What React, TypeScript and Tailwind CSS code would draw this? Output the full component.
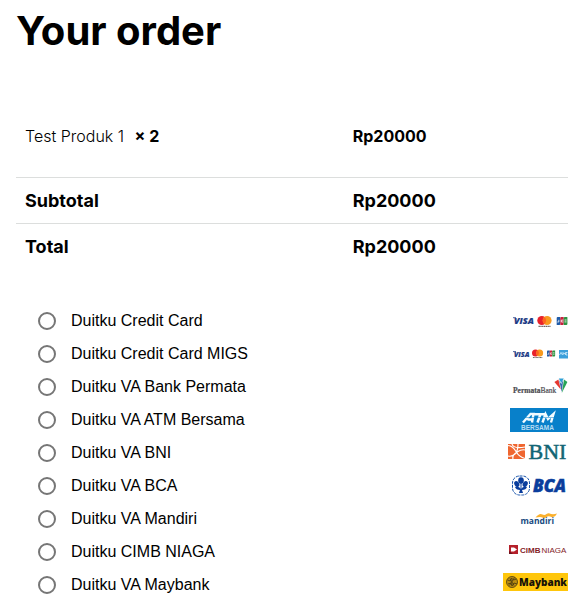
import type { ReactNode } from "react";

function Logo({ label, children }: { label: string; children: ReactNode }) {
  return (
    <svg role="img" aria-label={label} viewBox="0 0 66 33" className="h-[33px] w-[66px] shrink-0">
      {children}
    </svg>
  );
}

const sans = "'Open Sans', 'Noto Sans', sans-serif";

function VisaMark({ size, y }: { size: number; y: number }) {
  return (
    <g>
      <text x="12" y={y} fontFamily={sans} fontSize={size} fontWeight="800" fontStyle="italic" fill="#1b3a85" stroke="#1b3a85" strokeWidth=".2">
        VISA
      </text>
      <path d={`M11 ${y - size * 0.7}h3`} stroke="#1b3a85" strokeWidth=".8" />
    </g>
  );
}

function Mastercard() {
  return (
    <g>
      <circle cx="4.5" cy="4.5" r="4.5" fill="#e8212b" />
      <circle cx="9.8" cy="4.5" r="4.5" fill="#f79a1f" />
      <path d="M7.15 1a4.5 4.5 0 0 1 0 7a4.5 4.5 0 0 1 0-7z" fill="#ff6420" />
      <path d="M1.2 10.3h12" stroke="#4a3a38" strokeWidth="1" strokeDasharray="1.4 .4" />
    </g>
  );
}

function Jcb() {
  return (
    <g>
      <path d="M1 0h2.6v7q0 1-1 1H0V1q0-1 1-1z" fill="#1f5ba8" />
      <path d="M4.6 0H7v7q0 1-1 1H3.6V1q0-1 1-1z" fill="#c8203c" />
      <path d="M8.3 0h2.4v7q0 1-1 1H7V1q0-1 1.3-1z" fill="#2c9440" />
      <path d="M.6 5h1.5V2.8M6.6 3.1H4.6v1.9h2M7.8 3h2.1M7.8 4.9h2.1" fill="none" stroke="#fff" strokeWidth=".8" />
    </g>
  );
}

const cardLogo = (
  <Logo label="Visa, Mastercard, JCB">
    <VisaMark size={9} y={20} />
    <g transform="translate(35.3 12)"><Mastercard /></g>
    <g transform="translate(54.7 13)"><Jcb /></g>
  </Logo>
);

const migsLogo = (
  <Logo label="Visa, Mastercard, JCB, American Express">
    <VisaMark size={7} y={19.5} />
    <g transform="translate(30 12.5) scale(.78)"><Mastercard /></g>
    <g transform="translate(45 13.5) scale(.76)"><Jcb /></g>
    <rect x="57" y="13" width="9" height="8.5" fill="#3b9fda" />
    <path d="M57.5 18l1.5-2.6L60.5 18M61 18v-2.5l1.2 1.5 1.2-1.5V18M65.5 15.5h-1.5V18h1.5" fill="none" stroke="#d5effc" strokeWidth=".8" />
  </Logo>
);

const permataLogo = (
  <Logo label="PermataBank">
    <text x="11" y="23" fontFamily="'Liberation Serif', serif" fontSize="7.5" fontWeight="700" fill="#4d4d52" stroke="#4d4d52" strokeWidth=".2">
      Permata<tspan fontWeight="400">Bank</tspan>
    </text>
    <path d="M52.4 12l4-2.4 2.4 10z" fill="#e5372f" />
    <path d="M56.8 8.6h5l-2.5 4.4z" fill="#2e9fd5" />
    <path d="M57 10l2.2 4 2-4-1.4 12z" fill="#3567ad" />
    <path d="M62 9.6l3.4 2.4-5.6 11z" fill="#27a457" />
  </Logo>
);

const atmLogo = (
  <Logo label="ATM Bersama">
    <rect x="8" y="5" width="58" height="24" fill="#0880ca" />
    <g fill="none" stroke="#f3fbff">
      <path d="M21 19.5l7.5-8.5h3L30 19.5M25.5 16.5h5M32 11.2h11M38.5 11l-3 8.5M40.5 19.5l3-8.5 2.5 5 5.5-5-2.5 8.5" strokeWidth="2.4" />
      <path d="M20.5 14.5h12M34 14.5h18" stroke="#0880ca" strokeWidth=".5" />
    </g>
    <text x="19" y="26.5" fontFamily="'Liberation Sans', sans-serif" fontSize="6.5" fontWeight="700" fill="#b5dcf2">BERSAMA</text>
  </Logo>
);

const bniLogo = (
  <Logo label="BNI">
    <rect x="6" y="8" width="17" height="15" fill="#ef6630" />
    <path d="M6 9.5q5 .5 8 6t9 7M6 20q4 1 7-2t3-10M11 23q-1-4 4-7t8-2M10 8q1 5 13 3" fill="none" stroke="#fff" strokeWidth="1.2" />
    <text x="26.5" y="23" fontFamily="'Liberation Serif', serif" fontSize="22" fill="#126574" stroke="#126574" strokeWidth=".5">BNI</text>
  </Logo>
);

const bcaLogo = (
  <Logo label="BCA">
    <rect x="10.5" y="7" width="17" height="19" rx="7" fill="#fff" stroke="#1552ab" strokeWidth="1" strokeDasharray="3 1" />
    <g fill="#0a3d9c">
      <ellipse cx="19" cy="11.5" rx="2.8" ry="3.2" />
      <ellipse cx="14.8" cy="15" rx="2.3" ry="3.2" transform="rotate(-30 14.8 15)" />
      <ellipse cx="23.2" cy="15" rx="2.3" ry="3.2" transform="rotate(30 23.2 15)" />
      <path d="M13 18q4-1 6 2 2-3 6-2-1 3-5 3l1 3h-4l1-3q-4 0-5-3z" />
      <path d="M18.5 14h1v7h-1z" />
    </g>
    <text x="31" y="23" fontFamily={sans} fontSize="17" fontWeight="800" fontStyle="italic" fill="#0a3d9c" stroke="#0a3d9c" strokeWidth=".5">BCA</text>
  </Logo>
);

const mandiriLogo = (
  <Logo label="Mandiri">
    <text x="18.5" y="21.5" fontFamily={sans} fontSize="8.5" fontWeight="700" fill="#174a80">mandiri</text>
    <path d="M33.5 15.5q4-5 7-3 2 1 4-.5t4.500 0q3 .5 6-.5-2 4-5.500 3.500-3-1.500-5 0t-4 .5-7 0z" fill="#fbb02c" />
  </Logo>
);

const cimbLogo = (
  <Logo label="CIMB Niaga">
    <rect x="7" y="10" width="9" height="9" fill="#b5202b" />
    <path d="M7 16l4 3H7z" fill="#70131c" />
    <path d="M9 12.5h3l3 2-3 2H9z" fill="#fff" />
    <text x="18" y="17.5" fontFamily="'Liberation Sans', sans-serif" fontSize="8" fontWeight="700" fill="#841d27">
      CIMB<tspan fontWeight="400" dx="1">NIAGA</tspan>
    </text>
  </Logo>
);

const maybankLogo = (
  <Logo label="Maybank">
    <rect x="1" y="5" width="65" height="18" fill="#ffc60b" />
    <circle cx="10" cy="14" r="5.5" fill="#ba8d11" stroke="#5c4611" strokeWidth=".9" />
    <path d="M5.5 12l3 1 1-3 2 2 3-1M6 16l3-1 1 3 2-3 3 1M8 10.5l4 7M12.5 9.5l-5 8" fill="none" stroke="#433510" strokeWidth=".8" />
    <text x="17" y="17.5" fontFamily={sans} fontSize="10" fontWeight="800" fill="#161208">Maybank</text>
  </Logo>
);

const methods = [
  { id: "cc", name: "Duitku Credit Card", logo: cardLogo },
  { id: "migs", name: "Duitku Credit Card MIGS", logo: migsLogo },
  { id: "permata", name: "Duitku VA Bank Permata", logo: permataLogo },
  { id: "atm", name: "Duitku VA ATM Bersama", logo: atmLogo },
  { id: "bni", name: "Duitku VA BNI", logo: bniLogo },
  { id: "bca", name: "Duitku VA BCA", logo: bcaLogo },
  { id: "mandiri", name: "Duitku VA Mandiri", logo: mandiriLogo },
  { id: "cimb", name: "Duitku CIMB NIAGA", logo: cimbLogo },
  { id: "maybank", name: "Duitku VA Maybank", logo: maybankLogo },
];

export default function App() {
  return (
    <main className="bg-white px-4 pt-2 pr-[18px] font-['Inter',sans-serif] text-black">
      <h1 className="text-[40px] leading-[46px] font-bold">Your order</h1>

      <table className="mt-[42px] w-full table-fixed border-collapse text-left">
        <colgroup>
          <col className="w-[61%]" />
          <col />
        </colgroup>
        <tbody>
          <tr className="h-[81px] text-base">
            <td className="pl-[9px] font-light">
              Test Produk 1 <strong className="ml-1.5 font-bold">× 2</strong>
            </td>
            <td className="font-bold">Rp20000</td>
          </tr>
        </tbody>
        <tfoot className="text-lg font-bold">
          <tr className="h-[46px] border-t border-[#dcdedd]">
            <th scope="row" className="pt-0.5 pl-[9px] font-bold">Subtotal</th>
            <td className="pt-0.5">Rp20000</td>
          </tr>
          <tr className="h-[46px] border-t border-[#dcdedd]">
            <th scope="row" className="pt-0.5 pl-[9px] font-bold">Total</th>
            <td className="pt-0.5">Rp20000</td>
          </tr>
        </tfoot>
      </table>

      <ul className="mt-[35px] font-['Liberation_Sans',Arial,sans-serif] text-base">
        {methods.map((method) => (
          <li key={method.id} className="flex h-[33px] items-center pl-[22px]">
            <input
              type="radio"
              name="payment"
              id={method.id}
              className="size-[18px] shrink-0 appearance-none rounded-full border-2 border-[#767676] bg-white checked:border-[5px]"
            />
            <label htmlFor={method.id} className="flex flex-1 items-center justify-between pl-[15px]">
              {method.name}
              {method.logo}
            </label>
          </li>
        ))}
      </ul>
    </main>
  );
}
